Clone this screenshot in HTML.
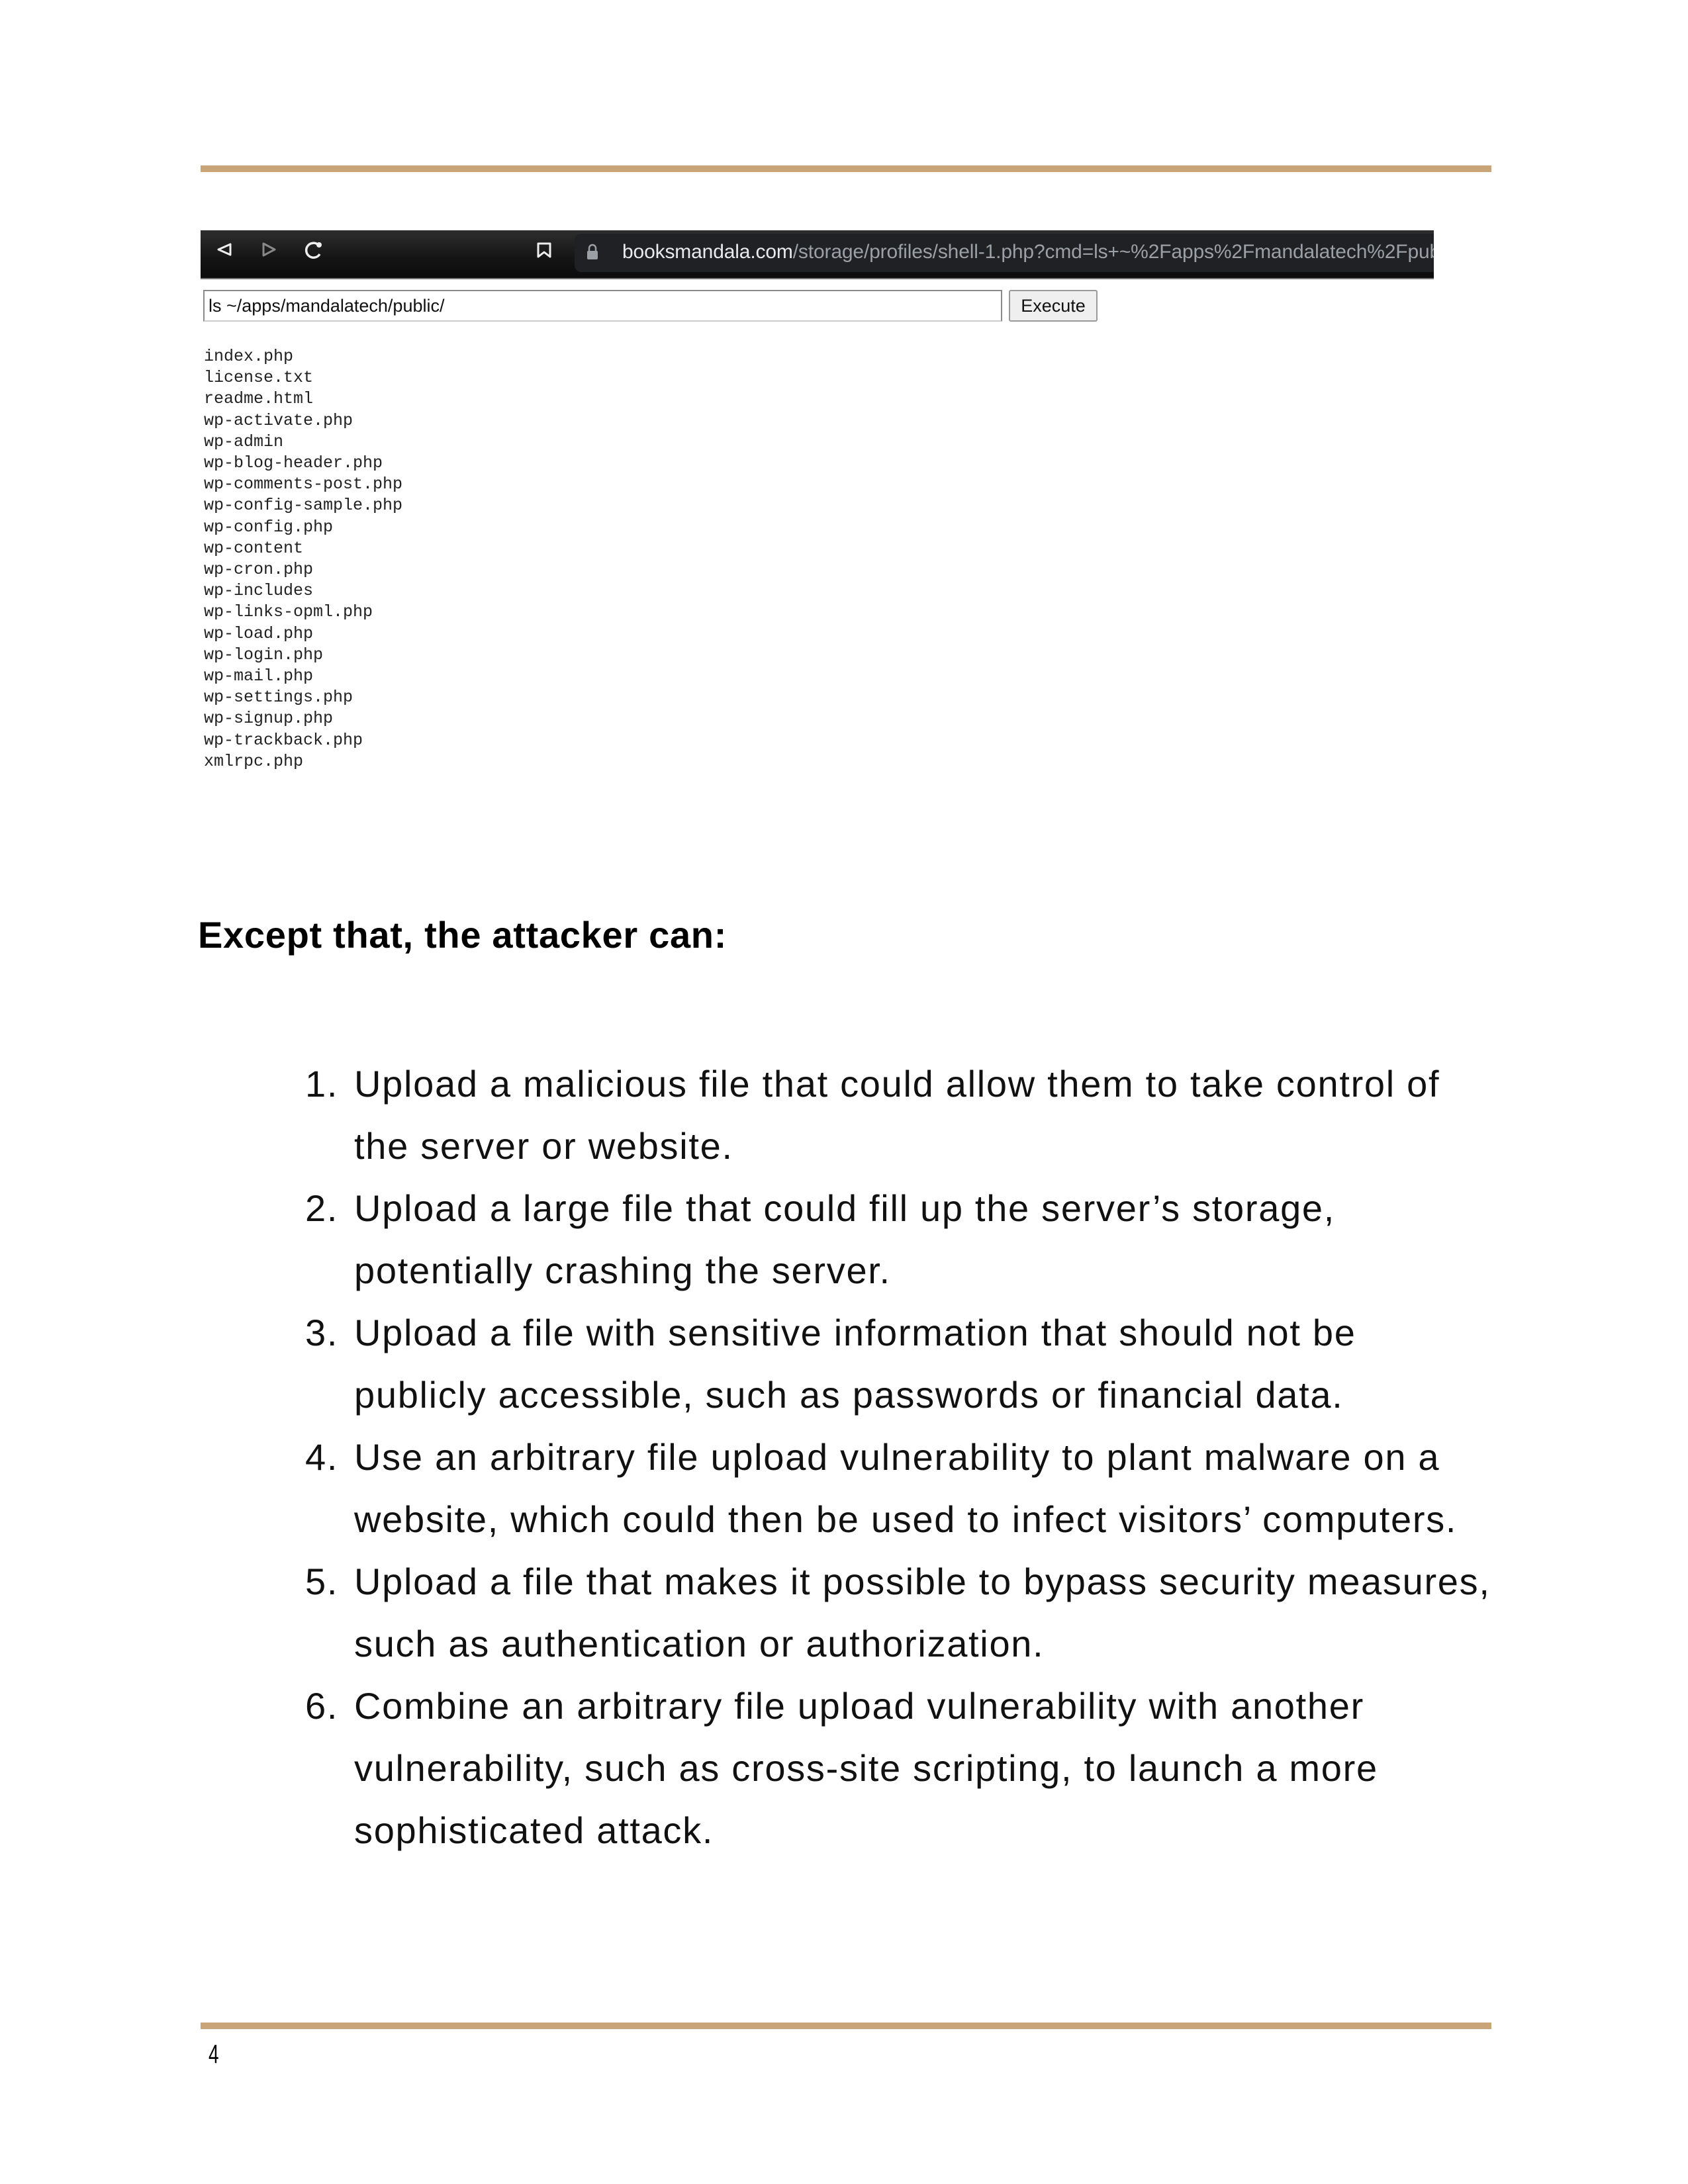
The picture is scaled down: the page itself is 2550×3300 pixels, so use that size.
<!DOCTYPE html>
<html><head><meta charset="utf-8">
<style>
html,body{margin:0;padding:0;background:#fff;}
body{width:2550px;height:3300px;position:relative;overflow:hidden;font-family:"Liberation Sans",sans-serif;}
.rule{position:absolute;left:303px;width:1950px;height:10px;background:#c8a478;}
.bar{position:absolute;left:303px;top:348px;width:1863px;height:74px;background:linear-gradient(#2e2e2e,#141414 60%,#0b0b0b);overflow:hidden;border-bottom:2px solid #777;box-sizing:border-box;}
.addr{position:absolute;left:565px;top:5px;width:1400px;height:58px;background:#202124;border-radius:10px 0 0 10px;}
.url{position:absolute;left:637px;top:13px;font-size:30px;line-height:40px;color:#9aa0a6;white-space:nowrap;letter-spacing:-0.15px;}
.url b{font-weight:normal;color:#e8eaed;}
.inp{position:absolute;left:307px;top:438px;width:1207px;height:48px;border:2px solid #8a8a8a;border-bottom-color:#ccc;box-sizing:border-box;font-size:27px;line-height:44px;padding-left:6px;color:#111;}
.btn{position:absolute;left:1524px;top:438px;width:134px;height:48px;border:2px solid #999;border-radius:3px;box-sizing:border-box;background:#efefef;font-size:27px;line-height:44px;text-align:center;color:#111;}
.ls{position:absolute;left:308px;top:523px;font-family:"Liberation Mono","DejaVu Sans Mono",monospace;font-size:25px;line-height:32.2px;color:#222;white-space:pre;}
.h{position:absolute;left:299px;top:1385px;font-size:56px;line-height:56px;font-weight:bold;color:#000;white-space:nowrap;letter-spacing:0.7px;}
.l{position:absolute;font-size:56px;line-height:94px;color:#111;white-space:nowrap;letter-spacing:1.7px;}
.n{left:461px;}
.t{left:535px;}
.pg{position:absolute;left:315px;top:3084px;font-size:40px;line-height:40px;color:#000;transform:scaleX(0.7);transform-origin:left top;}
</style></head><body>
<div class="rule" style="top:250px"></div>
<div class="bar">
 <svg style="position:absolute;left:0;top:0" width="560" height="74">
  <path d="M45 21 L27 29 L45 37 Z" fill="none" stroke="#eee" stroke-width="3" stroke-linejoin="round"/>
  <path d="M95 20 L112 29 L95 38 Z" fill="none" stroke="#888" stroke-width="3" stroke-linejoin="round"/>
  <path d="M178 22 A11 11 0 1 0 180 36" fill="none" stroke="#eee" stroke-width="3.5"/>
  <circle cx="179" cy="22" r="4" fill="#eee"/>
  <path d="M510 20 L528 20 L528 40 L519 33 L510 40 Z" fill="none" stroke="#eee" stroke-width="3" stroke-linejoin="round"/>
 </svg>
 <div class="addr">
  <svg style="position:absolute;left:17px;top:15px" width="20" height="26"><path d="M5 11 V7 A5 5 0 0 1 15 7 V11" fill="none" stroke="#9aa0a6" stroke-width="2.5"/><rect x="2" y="11" width="16" height="13" rx="2" fill="#9aa0a6"/></svg>
 </div>
 <div class="url"><b>booksmandala.com</b>/storage/profiles/shell-1.php?cmd=ls+~%2Fapps%2Fmandalatech%2Fpublic</div>
</div>
<div class="inp">ls ~/apps/mandalatech/public/</div>
<div class="btn">Execute</div>
<div class="ls">index.php
license.txt
readme.html
wp-activate.php
wp-admin
wp-blog-header.php
wp-comments-post.php
wp-config-sample.php
wp-config.php
wp-content
wp-cron.php
wp-includes
wp-links-opml.php
wp-load.php
wp-login.php
wp-mail.php
wp-settings.php
wp-signup.php
wp-trackback.php
xmlrpc.php</div>
<div class="h">Except that, the attacker can:</div>

<div class="l n" style="top:1591px">1.</div><div class="l t" style="top:1591px">Upload a malicious file that could allow them to take control of</div>
<div class="l t" style="top:1685px">the server or website.</div>
<div class="l n" style="top:1779px">2.</div><div class="l t" style="top:1779px">Upload a large file that could fill up the server’s storage,</div>
<div class="l t" style="top:1873px">potentially crashing the server.</div>
<div class="l n" style="top:1967px">3.</div><div class="l t" style="top:1967px">Upload a file with sensitive information that should not be</div>
<div class="l t" style="top:2061px">publicly accessible, such as passwords or financial data.</div>
<div class="l n" style="top:2155px">4.</div><div class="l t" style="top:2155px">Use an arbitrary file upload vulnerability to plant malware on a</div>
<div class="l t" style="top:2249px">website, which could then be used to infect visitors’ computers.</div>
<div class="l n" style="top:2343px">5.</div><div class="l t" style="top:2343px">Upload a file that makes it possible to bypass security measures,</div>
<div class="l t" style="top:2437px">such as authentication or authorization.</div>
<div class="l n" style="top:2531px">6.</div><div class="l t" style="top:2531px">Combine an arbitrary file upload vulnerability with another</div>
<div class="l t" style="top:2625px">vulnerability, such as cross-site scripting, to launch a more</div>
<div class="l t" style="top:2719px">sophisticated attack.</div>

<div class="rule" style="top:3056px"></div>
<div class="pg">4</div>
</body></html>
